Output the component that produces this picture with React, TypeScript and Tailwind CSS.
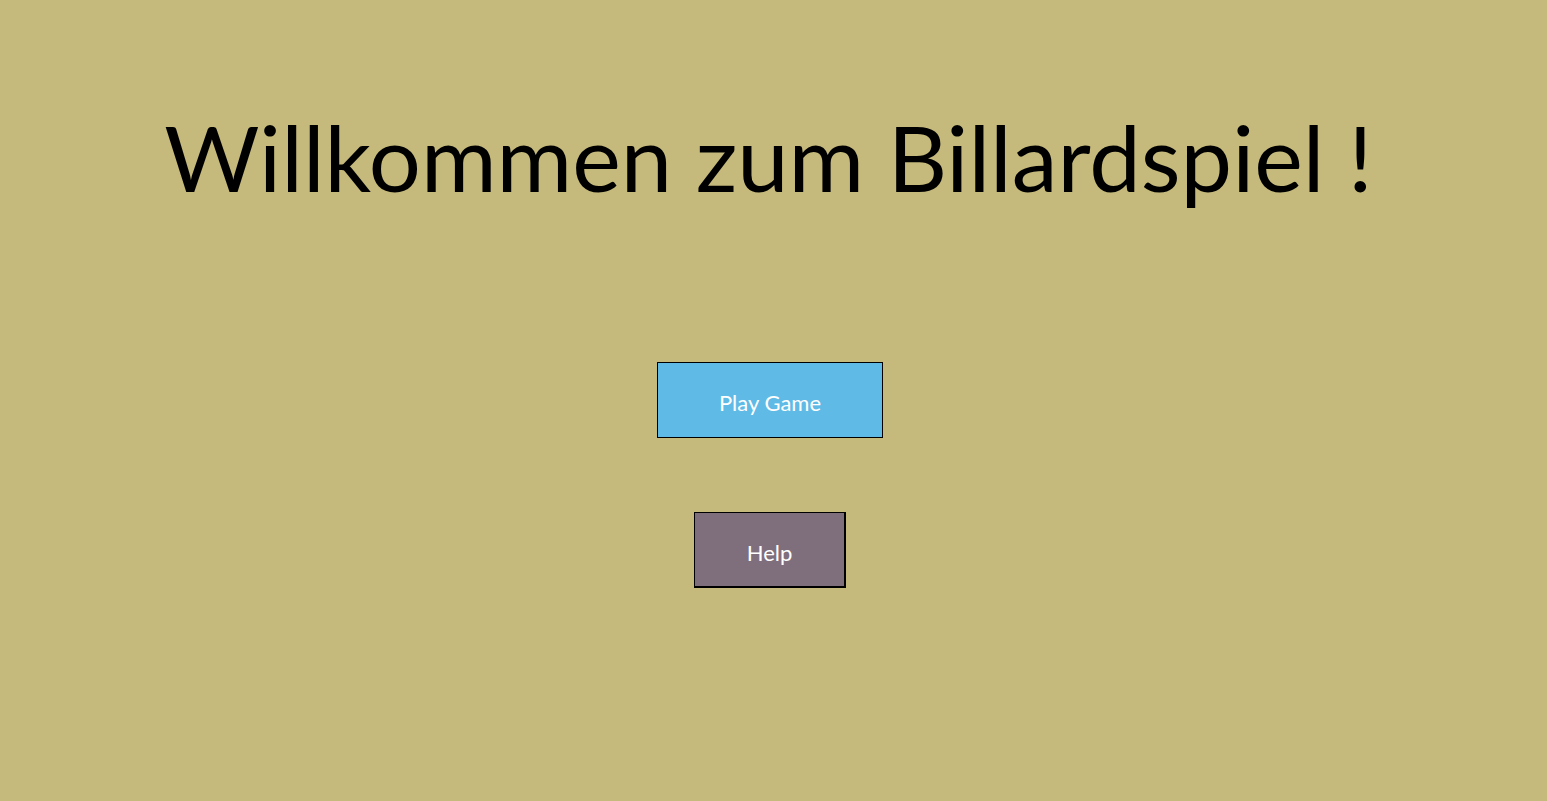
export default function App() {
  return (
    <div className="w-[1547px] h-[801px] bg-[#c5ba7b] flex flex-col items-center" style={{ fontFamily: "Lato, 'Noto Sans', sans-serif" }}>
      <h1 className="mt-[99px] text-[92px] leading-[116px] text-black ml-[-10px]">Willkommen zum Billardspiel !</h1>
      <button className="mt-[147px] ml-[-7px] w-[226px] h-[76px] pt-[5px] bg-[#5fbae6] border border-black text-white text-[22px]">Play Game</button>
      <button className="mt-[74px] ml-[-7px] w-[152px] h-[76px] pt-[5px] bg-[#7f6e7c] border border-black border-r-2 border-b-2 text-white text-[22px]">Help</button>
    </div>
  );
}
